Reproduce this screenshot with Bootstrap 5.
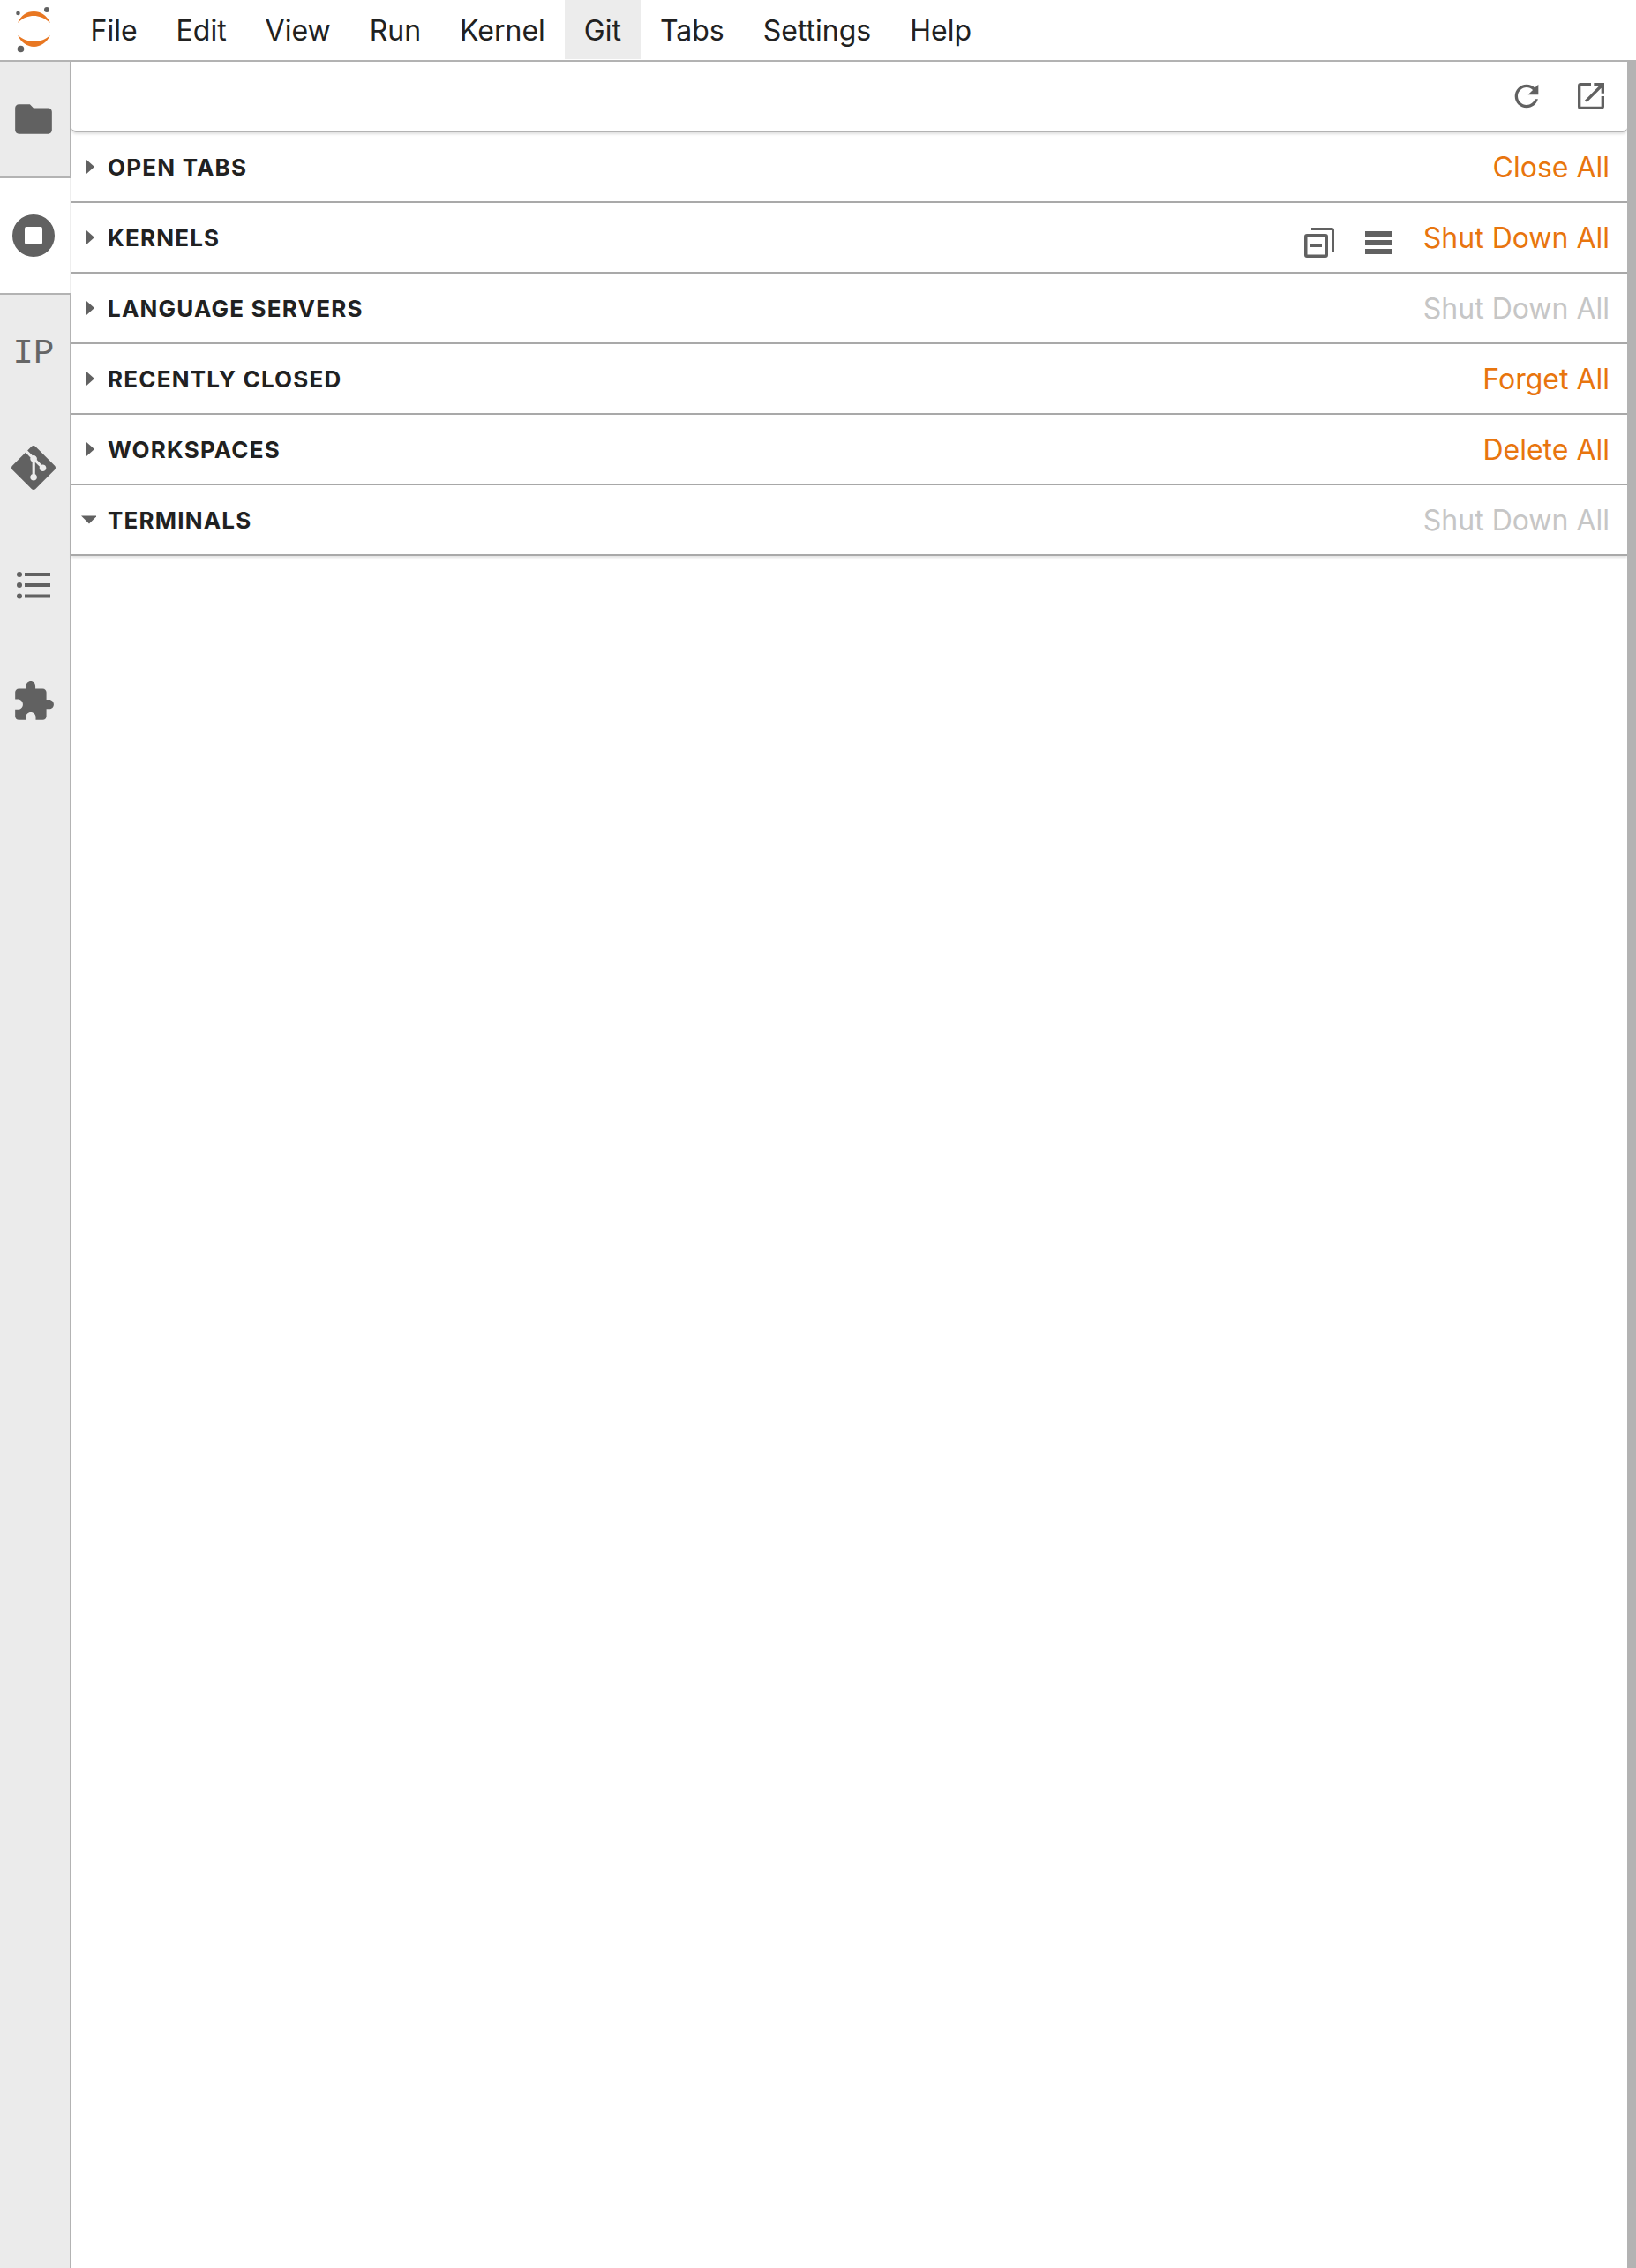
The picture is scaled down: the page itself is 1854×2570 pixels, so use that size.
<!doctype html>
<html lang="en">
<head>
  <meta charset="utf-8" />
  <title>JupyterLab</title>
  <link href="https://cdn.jsdelivr.net/npm/bootstrap@5.3.0/dist/css/bootstrap.min.css" rel="stylesheet" />
  <style>
    body {
      font-family: Inter, "Liberation Sans", sans-serif;
      color: #212121;
      background: #fff;
    }
    .lab-shell { height: 2570px; }
    .lab-menubar {
      height: 70px;
      border-bottom: 2px solid #b3b3b3;
      flex: none;
    }
    .lab-logo { width: 80.5px; height: 68px; flex: none; }
    .lab-menu-item {
      padding: 0 22px;
      font-size: 32px;
      line-height: 70px;
      height: 67px;
    }
    .lab-menu-item.is-open { background: #ececec; }
    .lab-sidebar {
      width: 81px;
      flex: none;
      background: #ebebeb;
      border-right: 2px solid #b3b3b3;
    }
    .lab-tab { height: 131.75px; width: 76px; }
    .lab-tab:first-child { height: 130px; }
    .lab-tab.is-active {
      height: 134px;
      width: 80px;
      padding-right: 4px;
      background: #fff;
      border-top: 2px solid #b3b3b3;
      border-bottom: 2px solid #b3b3b3;
      box-shadow: inset -1px 0 0 #eee;
    }
    .lab-tab svg { fill: #616161; display: block; }
    .lab-ip {
      font-family: "Liberation Mono", monospace;
      font-size: 39px;
      line-height: 1;
      color: #666;
    }
    .lab-gutter { width: 10px; flex: none; background: #b3b3b3; }
    .lab-toolbar {
      height: 80px;
      border-bottom: 2px solid #b3b3b3;
      border-radius: 0 0 5px 5px;
      box-shadow: 0 2px 3px rgba(0, 0, 0, .12);
      padding-right: 21px;
      gap: 33px;
    }
    .lab-toolbar svg { width: 40px; height: 40px; fill: #616161; display: block; }
    .lab-section {
      height: 80px;
      border-bottom: 2px solid #a9a9a9;
      padding-right: 20px;
    }
    .lab-section:last-child { box-shadow: 0 2px 3px rgba(0, 0, 0, .12); }
    .lab-caret { width: 41px; flex: none; }
    .lab-caret svg { display: block; fill: #616161; }
    .lab-title {
      font-size: 26px;
      font-weight: 700;
      letter-spacing: 1.2px;
      color: #212121;
    }
    .lab-action {
      padding: 2px 0 0;
      border: 0;
      background: none;
      font-size: 32px;
      color: #e8750e;
    }
    .lab-action:disabled { color: #c6c6c6; }
    .lab-row-icon { display: block; fill: #616161; margin-top: 12px; }
  </style>
</head>
<body>
  <div class="lab-shell d-flex flex-column">

    <div class="lab-menubar d-flex">
      <div class="lab-logo">
        <svg width="80" height="68" viewBox="0 0 80 68">
          <path fill="#e87722" d="M20 26C24 17 30 13 38.500 13C46 13 53 17 57 26C50 20 44 18 38.500 18C32 18 26 20 20 26Z" />
          <path fill="#e87722" d="M20 40C27 45 32 47 38.500 47C45 47 51 45 57 40C53 48 46 53 38.500 53C31 53 24 48 20 40Z" />
          <circle cx="53" cy="11" r="3" fill="#616161" />
          <circle cx="20.500" cy="15" r="2.300" fill="#616161" />
          <circle cx="23.500" cy="55.500" r="3.800" fill="#616161" />
        </svg>
      </div>
      <div class="lab-menu-item">File</div>
      <div class="lab-menu-item">Edit</div>
      <div class="lab-menu-item">View</div>
      <div class="lab-menu-item">Run</div>
      <div class="lab-menu-item">Kernel</div>
      <div class="lab-menu-item is-open">Git</div>
      <div class="lab-menu-item">Tabs</div>
      <div class="lab-menu-item">Settings</div>
      <div class="lab-menu-item">Help</div>
    </div>

    <div class="d-flex flex-grow-1">
      <div class="lab-sidebar">
        <div class="lab-tab d-flex align-items-center justify-content-center">
          <svg width="50" height="50" viewBox="0 0 24 24"><path d="M10 4H4c-1.100 0-2 .9-2 2v12c0 1.100.9 2 2 2h16c1.100 0 2-.9 2-2V8c0-1.100-.9-2-2-2h-8l-2-2z" /></svg>
        </div>
        <div class="lab-tab is-active d-flex align-items-center justify-content-center">
          <svg width="48" height="48" viewBox="0 0 48 48"><path fill-rule="evenodd" d="M24 0a24 24 0 1 0 0 48a24 24 0 1 0 0-48zM16 14h16a2 2 0 0 1 2 2v16a2 2 0 0 1-2 2H16a2 2 0 0 1-2-2V16a2 2 0 0 1 2-2z" /></svg>
        </div>
        <div class="lab-tab d-flex align-items-center justify-content-center pt-1">
          <span class="lab-ip">IP</span>
        </div>
        <div class="lab-tab d-flex align-items-center justify-content-center pb-1">
          <svg width="50" height="50" viewBox="0 0 24 24"><path d="M23.546 10.930L13.067.452c-.604-.603-1.582-.603-2.188 0L8.708 2.627l2.760 2.760c.645-.215 1.379-.07 1.889.441.516.515.658 1.258.438 1.900l2.658 2.660c.645-.223 1.387-.078 1.900.435.721.72.721 1.884 0 2.604-.719.719-1.881.719-2.600 0-.539-.541-.674-1.337-.404-1.996L12.860 8.955v6.525c.176.086.342.203.488.348.713.721.713 1.883 0 2.600-.719.721-1.889.721-2.609 0-.719-.719-.719-1.879 0-2.598.182-.18.387-.316.605-.406V8.835c-.217-.091-.424-.222-.6-.401-.545-.545-.676-1.342-.396-2.009L7.636 3.700.45 10.881c-.6.605-.6 1.584 0 2.189l10.480 10.477c.604.604 1.582.604 2.186 0l10.430-10.430c.605-.603.605-1.582 0-2.187" /></svg>
        </div>
        <div class="lab-tab d-flex align-items-center justify-content-center">
          <svg width="40" height="32" viewBox="0 0 40 32">
            <circle cx="4" cy="4" r="3" /><rect x="10" y="2" width="29" height="4" />
            <circle cx="4" cy="16" r="3" /><rect x="10" y="14" width="29" height="4" />
            <circle cx="4" cy="28.500" r="3" /><rect x="10" y="26.500" width="29" height="4" />
          </svg>
        </div>
        <div class="lab-tab d-flex align-items-center justify-content-center">
          <svg width="50" height="50" viewBox="0 0 24 24"><path d="M20.500 11H19V7c0-1.100-.9-2-2-2h-4V3.500C13 2.120 11.880 1 10.500 1S8 2.120 8 3.500V5H4c-1.100 0-1.990.9-1.990 2v3.800H3.500c1.490 0 2.700 1.210 2.700 2.700s-1.210 2.700-2.700 2.700H2V20c0 1.100.9 2 2 2h3.800v-1.500c0-1.490 1.210-2.700 2.700-2.700 1.490 0 2.700 1.210 2.700 2.700V22H17c1.100 0 2-.9 2-2v-4h1.500c1.380 0 2.500-1.120 2.500-2.500S21.880 11 20.500 11z" /></svg>
        </div>
      </div>

      <div class="flex-grow-1">
        <div class="lab-toolbar d-flex align-items-center justify-content-end">
          <svg viewBox="0 0 24 24"><path d="M17.650 6.350C16.200 4.900 14.210 4 12 4c-4.420 0-7.990 3.580-7.990 8s3.570 8 7.990 8c3.730 0 6.840-2.550 7.730-6h-2.080c-.82 2.330-3.040 4-5.650 4-3.310 0-6-2.690-6-6s2.690-6 6-6c1.660 0 3.140.69 4.220 1.780L13 11h7V4l-2.350 2.350z" /></svg>
          <svg viewBox="0 0 24 24"><path d="M19 19H5V5h7V3H5a2 2 0 0 0-2 2v14a2 2 0 0 0 2 2h14c1.100 0 2-.9 2-2v-7h-2v7zM14 3v2h3.590l-9.830 9.830 1.410 1.410L19 6.410V10h2V3h-7z" /></svg>
        </div>

        <div class="lab-section d-flex align-items-center">
          <span class="lab-caret"><svg width="28" height="16" viewBox="0 0 28 16"><path d="M17 0l9 8l-9 8z" /></svg></span>
          <span class="lab-title">OPEN TABS</span>
          <button class="lab-action ms-auto">Close All</button>
        </div>
        <div class="lab-section d-flex align-items-center">
          <span class="lab-caret"><svg width="28" height="16" viewBox="0 0 28 16"><path d="M17 0l9 8l-9 8z" /></svg></span>
          <span class="lab-title">KERNELS</span>
          <svg class="lab-row-icon ms-auto" width="34" height="34" viewBox="0 0 34 34">
            <path fill-rule="evenodd" d="M3 7h21a3 3 0 0 1 3 3v21a3 3 0 0 1-3 3H3a3 3 0 0 1-3-3V10a3 3 0 0 1 3-3zM3.500 10v20.500h20V10z" />
            <rect x="7" y="19" width="13" height="3" />
            <path d="M8 0h23a3 3 0 0 1 3 3v24h-3V3H8z" />
          </svg>
          <svg class="lab-row-icon" style="margin-left:35px" width="30" height="26" viewBox="0 0 30 26">
            <rect y="0" width="30" height="6" /><rect y="10" width="30" height="6" /><rect y="20" width="30" height="6" />
          </svg>
          <button class="lab-action" style="margin-left:36px">Shut Down All</button>
        </div>
        <div class="lab-section d-flex align-items-center">
          <span class="lab-caret"><svg width="28" height="16" viewBox="0 0 28 16"><path d="M17 0l9 8l-9 8z" /></svg></span>
          <span class="lab-title">LANGUAGE SERVERS</span>
          <button class="lab-action ms-auto" disabled>Shut Down All</button>
        </div>
        <div class="lab-section d-flex align-items-center">
          <span class="lab-caret"><svg width="28" height="16" viewBox="0 0 28 16"><path d="M17 0l9 8l-9 8z" /></svg></span>
          <span class="lab-title">RECENTLY CLOSED</span>
          <button class="lab-action ms-auto">Forget All</button>
        </div>
        <div class="lab-section d-flex align-items-center">
          <span class="lab-caret"><svg width="28" height="16" viewBox="0 0 28 16"><path d="M17 0l9 8l-9 8z" /></svg></span>
          <span class="lab-title">WORKSPACES</span>
          <button class="lab-action ms-auto">Delete All</button>
        </div>
        <div class="lab-section d-flex align-items-center">
          <span class="lab-caret"><svg width="28" height="16" viewBox="0 0 28 16"><path d="M11 3.500h18l-9 9z" /></svg></span>
          <span class="lab-title">TERMINALS</span>
          <button class="lab-action ms-auto" disabled>Shut Down All</button>
        </div>
      </div>

      <div class="lab-gutter"></div>
    </div>
  </div>
  <script src="https://cdn.jsdelivr.net/npm/bootstrap@5.3.0/dist/js/bootstrap.bundle.min.js"></script>
</body>
</html>
